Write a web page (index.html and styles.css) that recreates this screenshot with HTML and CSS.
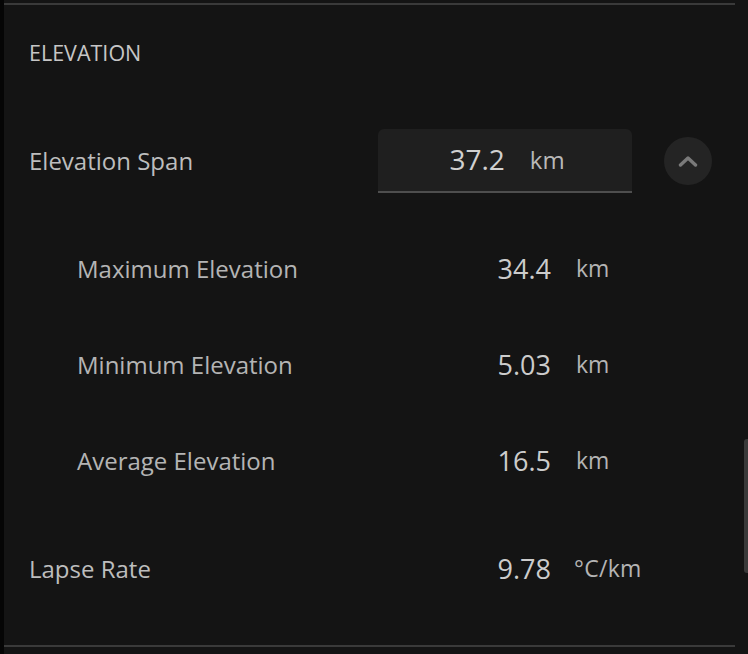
FILE: index.html
```html
<!DOCTYPE html>
<html>
<head>
<meta charset="utf-8">
<link rel="stylesheet" href="styles.css">
</head>
<body>
<div class="edge"></div>
<div class="panel">
  <div class="section">
    <div class="header">ELEVATION</div>
    <div class="row row-main">
      <div class="label">Elevation Span</div>
      <div class="field"><span class="field-val">37.2</span><span class="field-unit">km</span></div>
      <button class="toggle" aria-label="collapse">
        <svg width="20" height="12" viewBox="0 0 20 12"><path d="M2.5 10 L10 3 L17.5 10" fill="none" stroke="#7a7a7a" stroke-width="3.4" stroke-linecap="round" stroke-linejoin="round"/></svg>
      </button>
    </div>
    <div class="row sub first-sub">
      <div class="label">Maximum Elevation</div>
      <div class="val">34.4</div>
      <div class="unit">km</div>
    </div>
    <div class="row sub">
      <div class="label">Minimum Elevation</div>
      <div class="val">5.03</div>
      <div class="unit">km</div>
    </div>
    <div class="row sub">
      <div class="label">Average Elevation</div>
      <div class="val">16.5</div>
      <div class="unit">km</div>
    </div>
    <div class="row last">
      <div class="label">Lapse Rate</div>
      <div class="val">9.78</div>
      <div class="unit">°C/km</div>
    </div>
  </div>
  <div class="scrollbar"></div>
</div>
</body>
</html>
```
FILE: styles.css
```css
html, body {
  margin: 0;
  padding: 0;
  background: #000;
  height: 654px;
  overflow: hidden;
}
body {
  display: flex;
  font-family: "Open Sans", "Noto Sans", sans-serif;
  color: #c6c6c6;
}
.edge {
  width: 4px;
  height: 654px;
  background: #050505;
}
.panel {
  position: relative;
  width: 744px;
  height: 654px;
  background: #141414;
}
.section {
  margin-top: 3px;
  border-top: 2px solid #3a3a3a;
  border-bottom: 2px solid #3a3a3a;
  margin-right: 13px;
  padding-bottom: 28px;
}
.header {
  height: 94px;
  display: flex;
  align-items: center;
  padding-left: 25px;
  font-size: 21.5px;
  color: #c6c6c6;
}
.row {
  display: flex;
  align-items: center;
  padding-left: 25px;
}
.row-main {
  height: 64px;
  margin-top: 30px;
  padding-right: 23px;
}
.label {
  flex: 1;
  font-size: 24px;
  color: #bdbdbd;
  padding-bottom: 2px;
}
.sub .label {
  padding-left: 48px;
  color: #b4b4b4;
}
.field {
  width: 254px;
  height: 62px;
  box-sizing: content-box;
  background: #1f1f1f;
  border-radius: 6px 6px 0 0;
  border-bottom: 2px solid #4e4e4e;
  display: flex;
  align-items: center;
  justify-content: center;
  gap: 25px;
  padding-bottom: 0;
}
.field-val {
  font-size: 28px;
  color: #d0d0d0;
  margin-left: 4px;
  padding-bottom: 2px;
}
.field-unit {
  font-size: 24px;
  color: #b8b8b8;
  padding-bottom: 2px;
}
.toggle {
  margin-left: 32px;
  width: 48px;
  height: 48px;
  border-radius: 50%;
  background: #242424;
  border: none;
  padding: 0;
  display: flex;
  align-items: center;
  justify-content: center;
}
.sub {
  height: 96px;
}
.first-sub {
  margin-top: 28px;
}
.last {
  height: 96px;
  margin-top: 12px;
}
.val {
  width: 120px;
  text-align: right;
  font-size: 27px;
  color: #cccccc;
  padding-bottom: 2px;
}
.unit {
  width: 159px;
  margin-left: 25px;
  font-size: 23px;
  color: #b4b4b4;
  padding-bottom: 2px;
}
.last .val {
  margin-right: -1px;
}
.last .unit {
  margin-left: 24px;
  width: 161px;
  letter-spacing: 0.3px;
}
.scrollbar {
  position: absolute;
  right: 0;
  top: 439px;
  width: 4px;
  height: 134px;
  border-radius: 3px 0 0 3px;
  background: #3a3a3a;
}
```
